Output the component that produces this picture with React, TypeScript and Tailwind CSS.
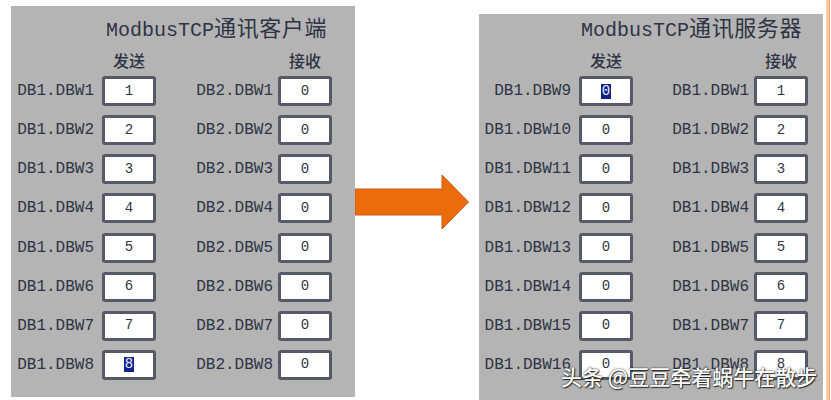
import React from "react";

type Row = {
  send: string;
  sendVal: string;
  recv: string;
  recvVal: string;
  mark?: boolean;
};

const mono = "font-['Liberation_Mono',monospace]";
const cjk = "font-['Noto_Sans_CJK_SC',sans-serif]";

const clientRows: Row[] = [1, 2, 3, 4, 5, 6, 7, 8].map((n) => ({
  send: `DB1.DBW${n}`,
  sendVal: String(n),
  recv: `DB2.DBW${n}`,
  recvVal: "0",
  mark: n === 8,
}));

const serverRows: Row[] = [1, 2, 3, 4, 5, 6, 7, 8].map((n) => ({
  send: `DB1.DBW${n + 8}`,
  sendVal: "0",
  recv: `DB1.DBW${n}`,
  recvVal: String(n),
  mark: n === 1,
}));

const ValueBox = ({ value, mark }: { value: string; mark?: boolean }) => (
  <div
    className={`w-[54px] h-[30px] shrink-0 rounded-[3px] border-[3px] border-[#565a68] bg-white flex items-center justify-center text-[14px] text-[#2f3444] ${mono}`}
  >
    {mark ? (
      <span className="bg-[#13238a] text-[#e8ecff] leading-[15px] px-[1px]">{value}</span>
    ) : (
      value
    )}
  </div>
);

interface PanelProps {
  latin: string;
  han: string;
  titlePad: string;
  sendW: string;
  recvW: string;
  height: string;
  rows: Row[];
}

const Panel = ({ latin, han, titlePad, sendW, recvW, height, rows }: PanelProps) => (
  <div className={`w-[344px] ${height} bg-[#b4b4b4] shrink-0 text-[#2e3445]`}>
    {/* Title */}
    <div className={`mt-[8px] h-[24px] leading-[24px] whitespace-nowrap ${titlePad}`}>
      <span className={`${mono} text-[20px]`}>{latin}</span>
      <span className={`${cjk} text-[22px] tracking-[0.6px]`}>{han}</span>
    </div>

    {/* Column headers */}
    <div className={`mt-[14px] h-[16px] flex leading-[16px] text-[16px] font-medium ${cjk}`}>
      <div className={sendW} />
      <div className="w-[54px] text-center">发送</div>
      <div className={recvW} />
      <div className="w-[54px] text-center">接收</div>
    </div>

    {/* Rows */}
    <div className="mt-[8px] flex flex-col gap-[9.15px]">
      {rows.map((r) => (
        <div key={r.send} className={`flex items-center text-[16px] ${mono}`}>
          <div className={`${sendW} text-right pr-[8px] whitespace-nowrap`}>{r.send}</div>
          <ValueBox value={r.sendVal} mark={r.mark} />
          <div className={`${recvW} text-right pr-[5px] whitespace-nowrap`}>{r.recv}</div>
          <ValueBox value={r.recvVal} />
        </div>
      ))}
    </div>
  </div>
);

const Arrow = () => (
  <div className="w-[114px] h-[391px] shrink-0 flex items-center">
    <svg width="114" height="56" viewBox="0 0 114 56">
      <polygon
        points="0,15 87,15 87,1 113.5,28 87,55 87,41 0,41"
        fill="#ec6b0a"
        stroke="#c65c16"
        strokeWidth="1"
      />
    </svg>
  </div>
);

export default function App() {
  return (
    <div className="relative w-[831px] h-[400px] bg-white overflow-hidden flex items-start">
      <div className="flex items-start pt-[6px] pl-[11px]">
        <Panel
          latin="ModbusTCP"
          han="通讯客户端"
          titlePad="pl-[95px]"
          sendW="w-[91px]"
          recvW="w-[122px]"
          height="h-[391px]"
          rows={clientRows}
        />
        <Arrow />
        <div className="ml-[10px]">
          <Panel
            latin="ModbusTCP"
            han="通讯服务器"
            titlePad="pl-[102px]"
            sendW="w-[100px]"
            recvW="w-[121px]"
            height="h-[387px]"
            rows={serverRows}
          />
        </div>
      </div>
      <div className="ml-[3px] w-[4px] h-[400px] bg-[#f7cba6] border-r border-[#f0a468]" />

      {/* Watermark overlay */}
      <div
        className={`absolute left-[561px] top-[363px] text-[21px] leading-[26px] font-medium text-white whitespace-nowrap ${cjk} [text-shadow:0_0_2px_rgba(0,0,0,0.9),1px_1px_1px_rgba(0,0,0,0.7)]`}
      >
        头条 @豆豆牵着蜗牛在散步
      </div>
    </div>
  );
}
